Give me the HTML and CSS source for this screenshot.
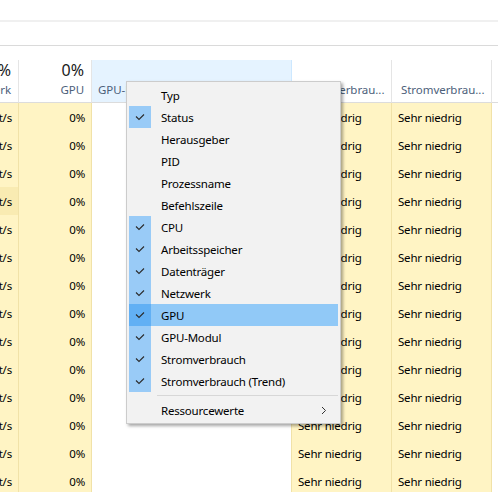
FILE: index.html
```html
<!DOCTYPE html>
<html lang="de">
<head>
<meta charset="utf-8">
<title>Task-Manager</title>
<link rel="stylesheet" href="styles.css">
</head>
<body>
<div class="top1"></div>
<div class="top2"></div>
<div class="gap"></div>
<div class="table">
  <div class="hcell num"><span class="big">0%</span><span class="lbl">Netzwerk</span></div>
  <div class="hcell num"><span class="big">0%</span><span class="lbl">GPU</span></div>
  <div class="hcell txt hover"><span class="lbl">GPU-Modul</span></div>
  <div class="hcell txt wide"><span class="lbl">Stromverbrau...</span></div>
  <div class="hcell txt wide"><span class="lbl">Stromverbrau...</span></div>
  <div class="hcell last"></div>

  <div class="cell num y">0 MBit/s</div><div class="cell num y">0%</div><div class="cell w"></div><div class="cell txt y">Sehr niedrig</div><div class="cell txt y">Sehr niedrig</div><div class="cell last"></div>
  <div class="cell num y">0 MBit/s</div><div class="cell num y">0%</div><div class="cell w"></div><div class="cell txt y">Sehr niedrig</div><div class="cell txt y">Sehr niedrig</div><div class="cell last"></div>
  <div class="cell num y">0 MBit/s</div><div class="cell num y">0%</div><div class="cell w"></div><div class="cell txt y">Sehr niedrig</div><div class="cell txt y">Sehr niedrig</div><div class="cell last"></div>
  <div class="cell num y2">0 MBit/s</div><div class="cell num y">0%</div><div class="cell w"></div><div class="cell txt y">Sehr niedrig</div><div class="cell txt y">Sehr niedrig</div><div class="cell last"></div>
  <div class="cell num y">0 MBit/s</div><div class="cell num y">0%</div><div class="cell w"></div><div class="cell txt y">Sehr niedrig</div><div class="cell txt y">Sehr niedrig</div><div class="cell last"></div>
  <div class="cell num y">0 MBit/s</div><div class="cell num y">0%</div><div class="cell w"></div><div class="cell txt y">Sehr niedrig</div><div class="cell txt y">Sehr niedrig</div><div class="cell last"></div>
  <div class="cell num y">0 MBit/s</div><div class="cell num y">0%</div><div class="cell w"></div><div class="cell txt y">Sehr niedrig</div><div class="cell txt y">Sehr niedrig</div><div class="cell last"></div>
  <div class="cell num y">0 MBit/s</div><div class="cell num y">0%</div><div class="cell w"></div><div class="cell txt y">Sehr niedrig</div><div class="cell txt y">Sehr niedrig</div><div class="cell last"></div>
  <div class="cell num y">0 MBit/s</div><div class="cell num y">0%</div><div class="cell w"></div><div class="cell txt y">Sehr niedrig</div><div class="cell txt y">Sehr niedrig</div><div class="cell last"></div>
  <div class="cell num y">0 MBit/s</div><div class="cell num y">0%</div><div class="cell w"></div><div class="cell txt y">Sehr niedrig</div><div class="cell txt y">Sehr niedrig</div><div class="cell last"></div>
  <div class="cell num y">0 MBit/s</div><div class="cell num y">0%</div><div class="cell w"></div><div class="cell txt y">Sehr niedrig</div><div class="cell txt y">Sehr niedrig</div><div class="cell last"></div>
  <div class="cell num y">0 MBit/s</div><div class="cell num y">0%</div><div class="cell w"></div><div class="cell txt y">Sehr niedrig</div><div class="cell txt y">Sehr niedrig</div><div class="cell last"></div>
  <div class="cell num y">0 MBit/s</div><div class="cell num y">0%</div><div class="cell w"></div><div class="cell txt y">Sehr niedrig</div><div class="cell txt y">Sehr niedrig</div><div class="cell last"></div>
  <div class="cell num y">0 MBit/s</div><div class="cell num y">0%</div><div class="cell w"></div><div class="cell txt y">Sehr niedrig</div><div class="cell txt y">Sehr niedrig</div><div class="cell last"></div>
</div>

<div class="menu">
  <div class="item"><span class="chk"></span><span class="label">Typ</span></div>
  <div class="item"><span class="chk on"><svg width="10" height="8" viewBox="0 0 10 8"><polyline points="1,3.5 4,6.5 9,1.5"/></svg></span><span class="label">Status</span></div>
  <div class="item"><span class="chk"></span><span class="label">Herausgeber</span></div>
  <div class="item"><span class="chk"></span><span class="label">PID</span></div>
  <div class="item"><span class="chk"></span><span class="label">Prozessname</span></div>
  <div class="item"><span class="chk"></span><span class="label">Befehlszeile</span></div>
  <div class="item"><span class="chk on"><svg width="10" height="8" viewBox="0 0 10 8"><polyline points="1,3.5 4,6.5 9,1.5"/></svg></span><span class="label">CPU</span></div>
  <div class="item"><span class="chk on"><svg width="10" height="8" viewBox="0 0 10 8"><polyline points="1,3.5 4,6.5 9,1.5"/></svg></span><span class="label">Arbeitsspeicher</span></div>
  <div class="item"><span class="chk on"><svg width="10" height="8" viewBox="0 0 10 8"><polyline points="1,3.5 4,6.5 9,1.5"/></svg></span><span class="label">Datenträger</span></div>
  <div class="item"><span class="chk on"><svg width="10" height="8" viewBox="0 0 10 8"><polyline points="1,3.5 4,6.5 9,1.5"/></svg></span><span class="label">Netzwerk</span></div>
  <div class="item active"><span class="chk on"><svg width="10" height="8" viewBox="0 0 10 8"><polyline points="1,3.5 4,6.5 9,1.5"/></svg></span><span class="label">GPU</span></div>
  <div class="item"><span class="chk on"><svg width="10" height="8" viewBox="0 0 10 8"><polyline points="1,3.5 4,6.5 9,1.5"/></svg></span><span class="label">GPU-Modul</span></div>
  <div class="item"><span class="chk on"><svg width="10" height="8" viewBox="0 0 10 8"><polyline points="1,3.5 4,6.5 9,1.5"/></svg></span><span class="label">Stromverbrauch</span></div>
  <div class="item"><span class="chk on"><svg width="10" height="8" viewBox="0 0 10 8"><polyline points="1,3.5 4,6.5 9,1.5"/></svg></span><span class="label">Stromverbrauch (Trend)</span></div>
  <div class="sep"></div>
  <div class="item"><span class="chk"></span><span class="label">Ressourcewerte</span><span class="arrow"><svg width="6" height="9" viewBox="0 0 6 9"><polyline points="1,1 4.5,4.5 1,8"/></svg></span></div>
</div>
</body>
</html>
```
FILE: styles.css
```css
* { box-sizing: border-box; }
html, body { margin: 0; padding: 0; background: #fff; overflow: hidden; }
body {
  width: 498px; height: 492px; position: relative;
  font-family: "Noto Sans", "Liberation Sans", sans-serif;
  font-size: 11.5px; letter-spacing: -0.2px; color: #000;
}
.top1 { height: 22px; border-bottom: 2px solid #f0f0f0; }
.top2 { height: 24px; border-bottom: 1px solid #dadada; }
.gap { height: 14px; }

.table {
  display: grid;
  grid-template-columns: 19px 73px 200px 100px 100px 1fr;
  grid-template-rows: 43px;
  grid-auto-rows: 28px;
}
.hcell {
  border-right: 1px solid #e5e5e5;
  border-bottom: 1px solid #dcdcdc;
  display: flex; flex-direction: column; justify-content: flex-end;
  white-space: nowrap; overflow: hidden;
  padding-bottom: 3px;
}
.hcell.num { align-items: flex-end; padding-right: 7px; }
.hcell.txt { padding-left: 6px; }
.hcell.txt.wide { padding-left: 9px; }
.hcell.hover { background: #e5f3ff; border-right-color: #cde8ff; }
.hcell.last { border-right: none; }
.big { font-size: 16px; line-height: 20px; color: #1a1a1a; letter-spacing: 0; margin-bottom: 1px; }
.lbl { font-size: 11.5px; line-height: 18px; color: #4c607a; letter-spacing: -0.05px; }

.cell {
  display: flex; align-items: center;
  white-space: nowrap;
  border-right: 1px solid #f1e2a8;
}
.cell.num { justify-content: flex-end; padding-right: 6px; }
.cell.txt { padding-left: 6px; overflow: hidden; }
.cell.y { background: #fff4c4; }
.cell.y2 { background: #f9ebb2; }
.cell.w { background: #fff; border-right-color: #f1e2a8; }
.cell.last { border-right: none; background: #fff; }

.menu {
  position: absolute; left: 126px; top: 81px;
  width: 215px; height: 343px;
  background: #f2f2f2;
  border: 1px solid #cccccc;
  padding: 2px;
  box-shadow: 2px 2px 3px rgba(0,0,0,0.35);
}
.item { height: 22px; display: flex; align-items: center; position: relative; }
.item.active { background: #91c9f7; }
.chk { width: 22px; height: 22px; flex: none; display: flex; align-items: center; justify-content: center; }
.chk.on { background: #99cbf7; }
.item.active .chk.on { background: #62b0f4; }
.chk svg polyline { fill: none; stroke: #2b2b2b; stroke-width: 1.1; }
.label { padding-left: 10px; }
.arrow { position: absolute; right: 11px; top: 7px; display: flex; }
.arrow svg polyline { fill: none; stroke: #333; stroke-width: 1; }
.sep { height: 7px; margin-left: 28px; display: flex; align-items: center; }
.sep::before { content: ""; display: block; height: 1px; width: 100%; background: #d7d7d7; }
```
